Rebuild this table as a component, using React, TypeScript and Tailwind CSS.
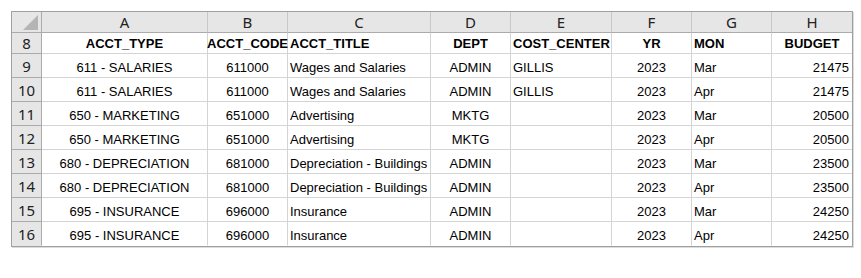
const columns = [
  { letter: "A", width: "w-[166px]", head: "ACCT_TYPE", headAlign: "justify-center", align: "justify-center" },
  { letter: "B", width: "w-[80px]", head: "ACCT_CODE", headAlign: "justify-center", align: "justify-center" },
  { letter: "C", width: "w-[143px]", head: "ACCT_TITLE", headAlign: "justify-start", align: "justify-start" },
  { letter: "D", width: "w-[80px]", head: "DEPT", headAlign: "justify-center", align: "justify-center" },
  { letter: "E", width: "w-[101px]", head: "COST_CENTER", headAlign: "justify-start", align: "justify-start" },
  { letter: "F", width: "w-[80px]", head: "YR", headAlign: "justify-center", align: "justify-center" },
  { letter: "G", width: "w-[80px]", head: "MON", headAlign: "justify-start", align: "justify-start" },
  { letter: "H", width: "w-[80px]", head: "BUDGET", headAlign: "justify-center", align: "justify-end" },
]

const rows = [
  { n: 9, cells: ["611 - SALARIES", "611000", "Wages and Salaries", "ADMIN", "GILLIS", "2023", "Mar", "21475"] },
  { n: 10, cells: ["611 - SALARIES", "611000", "Wages and Salaries", "ADMIN", "GILLIS", "2023", "Apr", "21475"] },
  { n: 11, cells: ["650 - MARKETING", "651000", "Advertising", "MKTG", "", "2023", "Mar", "20500"] },
  { n: 12, cells: ["650 - MARKETING", "651000", "Advertising", "MKTG", "", "2023", "Apr", "20500"] },
  { n: 13, cells: ["680 - DEPRECIATION", "681000", "Depreciation - Buildings", "ADMIN", "", "2023", "Mar", "23500"] },
  { n: 14, cells: ["680 - DEPRECIATION", "681000", "Depreciation - Buildings", "ADMIN", "", "2023", "Apr", "23500"] },
  { n: 15, cells: ["695 - INSURANCE", "696000", "Insurance", "ADMIN", "", "2023", "Mar", "24250"] },
  { n: 16, cells: ["695 - INSURANCE", "696000", "Insurance", "ADMIN", "", "2023", "Apr", "24250"] },
]

const headFont = { fontFamily: "'Noto Sans', 'Open Sans', sans-serif" }
const cellFont = { fontFamily: "'Liberation Sans', Arial, sans-serif" }

export default function App() {
  return (
    <div className="w-[861px] h-[278px] bg-white pt-[11px] pl-[11px]">
      <div className="inline-flex flex-col border border-[#a0a0a0] shadow-[1px_1px_0_#dcdcdc]">
        {/* column letters */}
        <div className="flex h-[21px]">
          <div className="w-[30px] h-full bg-[#e6e6e6] border-r border-b border-[#ababab] flex items-end justify-end pr-[3px] pb-[2px]">
            <svg width="15" height="15" viewBox="0 0 15 15">
              <polygon points="15,0 15,15 0,15" fill="#b4b4b4" />
            </svg>
          </div>
          {columns.map((c, i) => (
            <div
              key={c.letter}
              className={`${c.width} h-full bg-[#e6e6e6] border-b border-[#ababab] flex items-end justify-center pb-[1px] text-[15px] leading-[18px] text-[#222] ${i < columns.length - 1 ? "border-r border-r-[#c8c8c8]" : ""}`}
              style={headFont}
            >
              {c.letter}
            </div>
          ))}
        </div>

        {/* row 8 headers */}
        <div className="flex h-[21px]">
          <div
            className="w-[30px] h-full bg-[#e6e6e6] border-r border-b border-[#ababab] flex items-end justify-center pb-[1px] text-[15px] leading-[18px] text-[#222]"
            style={headFont}
          >
            8
          </div>
          {columns.map((c, i) => (
            <div
              key={c.head}
              className={`${c.width} h-full border-b border-[#d4d4d4] flex items-end ${c.headAlign} px-[2px] pb-[2px] text-[13px] leading-[15px] font-bold text-black whitespace-nowrap overflow-visible ${i < columns.length - 1 ? "border-r" : ""}`}
              style={cellFont}
            >
              {c.head}
            </div>
          ))}
        </div>

        {rows.map((r, ri) => (
          <div key={r.n} className="flex h-[24px]">
            <div
              className={`w-[30px] h-full bg-[#e6e6e6] border-r border-b flex items-end justify-center pb-[2px] text-[15px] leading-[18px] text-[#222] ${ri < rows.length - 1 ? "border-[#ababab]" : "border-r-[#ababab] border-b-transparent"}`}
              style={headFont}
            >
              {r.n}
            </div>
            {r.cells.map((v, i) => (
              <div
                key={i}
                className={`${columns[i].width} h-full border-b flex items-end ${columns[i].align} px-[2px] pb-[2px] text-[13px] leading-[15px] text-black whitespace-nowrap ${i < 7 ? "border-r border-r-[#d4d4d4]" : "pr-[3px]"} ${ri < rows.length - 1 ? "border-b-[#d4d4d4]" : "border-b-transparent"}`}
                style={cellFont}
              >
                {v}
              </div>
            ))}
          </div>
        ))}
      </div>
    </div>
  )
}
